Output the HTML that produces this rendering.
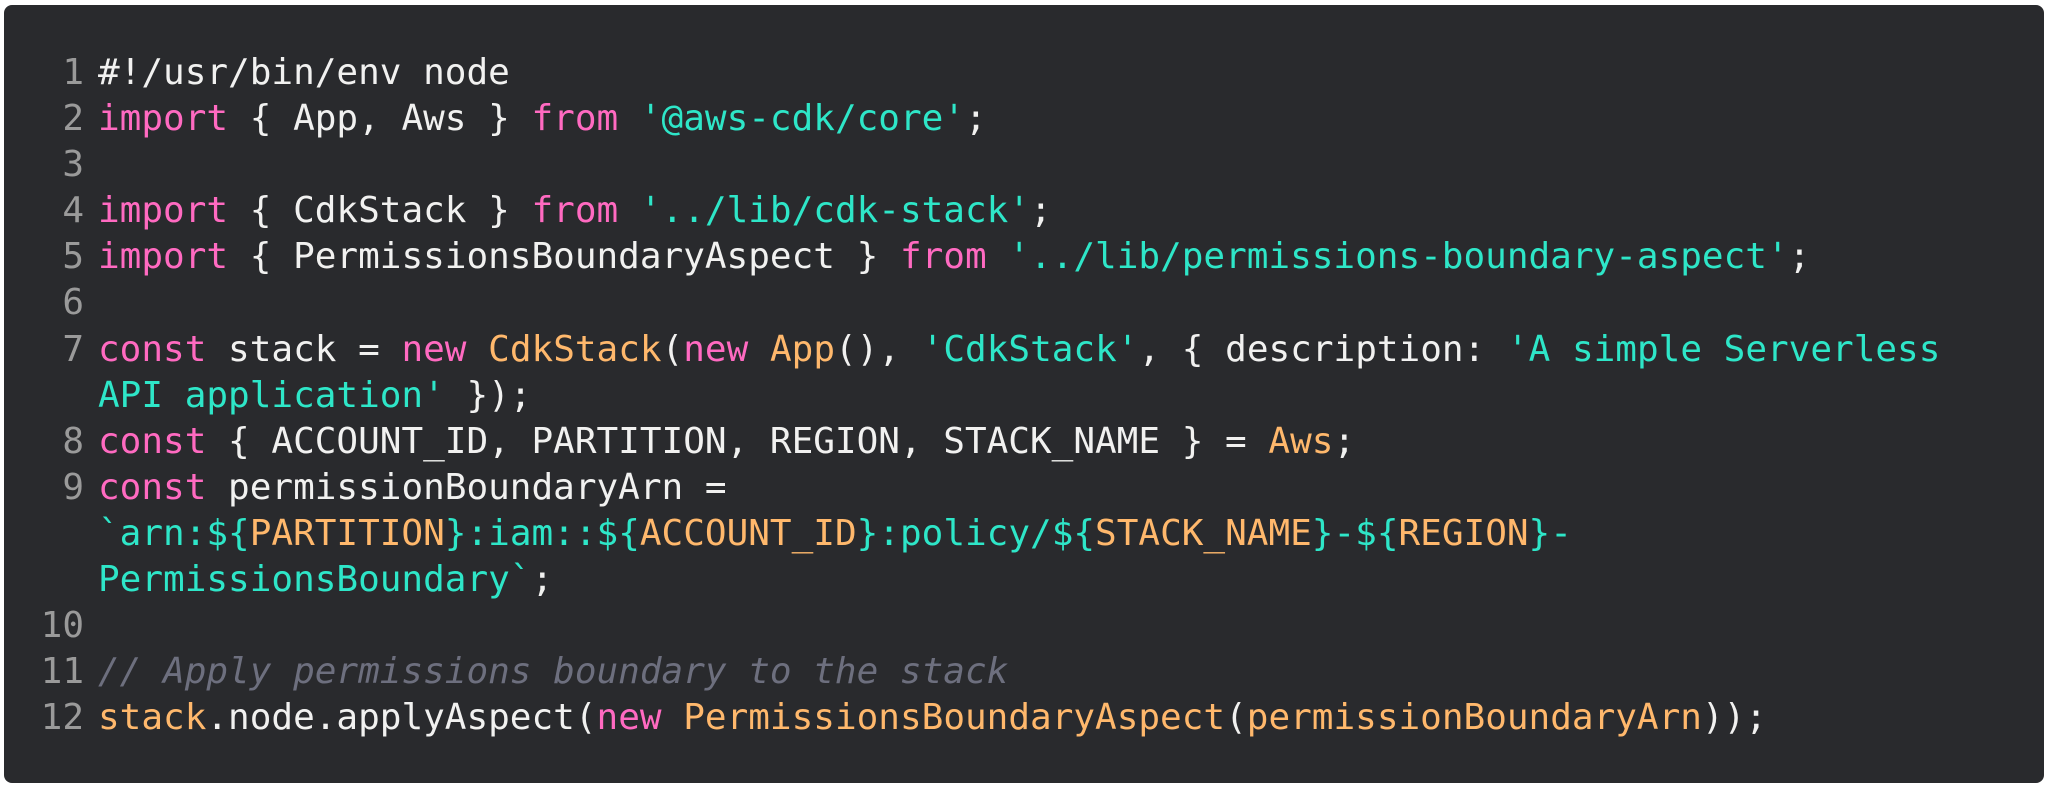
<!DOCTYPE html>
<html><head><style>
html,body{margin:0;padding:0;background:#fff;width:2048px;height:786px;overflow:hidden}
.box{position:absolute;left:4px;top:5px;width:2040px;height:778px;background:#292a2d;border-radius:8px}
.code{position:absolute;left:0;top:45px;font-family:"DejaVu Sans Mono","Liberation Mono",monospace;font-size:36px;line-height:46.1px;color:#f1f1f0}
.row{display:flex;height:46.1px;white-space:pre}
.n{width:80px;text-align:right;color:#9a9a9a;padding-right:14px;box-sizing:content-box;flex:none}
.k{color:#ff6ac1}.s{color:#2ee6c8}.o{color:#ffb86c}.c{color:#6d6f7e;font-style:italic}
</style></head><body>
<div class="box"><div class="code"><div class="row"><span class="n">1</span><span>#!/usr/bin/env node</span></div><div class="row"><span class="n">2</span><span><span class="k">import</span> { App, Aws } <span class="k">from</span> <span class="s">'@aws-cdk/core'</span>;</span></div><div class="row"><span class="n">3</span><span></span></div><div class="row"><span class="n">4</span><span><span class="k">import</span> { CdkStack } <span class="k">from</span> <span class="s">'../lib/cdk-stack'</span>;</span></div><div class="row"><span class="n">5</span><span><span class="k">import</span> { PermissionsBoundaryAspect } <span class="k">from</span> <span class="s">'../lib/permissions-boundary-aspect'</span>;</span></div><div class="row"><span class="n">6</span><span></span></div><div class="row"><span class="n">7</span><span><span class="k">const</span> stack = <span class="k">new</span> <span class="o">CdkStack</span>(<span class="k">new</span> <span class="o">App</span>(), <span class="s">'CdkStack'</span>, { description: <span class="s">'A simple Serverless</span></span></div><div class="row"><span class="n"></span><span><span class="s">API application'</span> });</span></div><div class="row"><span class="n">8</span><span><span class="k">const</span> { ACCOUNT_ID, PARTITION, REGION, STACK_NAME } = <span class="o">Aws</span>;</span></div><div class="row"><span class="n">9</span><span><span class="k">const</span> permissionBoundaryArn =</span></div><div class="row"><span class="n"></span><span><span class="s">`arn:${</span><span class="o">PARTITION</span><span class="s">}:iam::${</span><span class="o">ACCOUNT_ID</span><span class="s">}:policy/${</span><span class="o">STACK_NAME</span><span class="s">}-${</span><span class="o">REGION</span><span class="s">}-</span></span></div><div class="row"><span class="n"></span><span><span class="s">PermissionsBoundary`</span>;</span></div><div class="row"><span class="n">10</span><span></span></div><div class="row"><span class="n">11</span><span class="c">// Apply permissions boundary to the stack</span></div><div class="row"><span class="n">12</span><span><span class="o">stack</span>.node.applyAspect(<span class="k">new</span> <span class="o">PermissionsBoundaryAspect</span>(<span class="o">permissionBoundaryArn</span>));</span></div></div></div>
</body></html>
